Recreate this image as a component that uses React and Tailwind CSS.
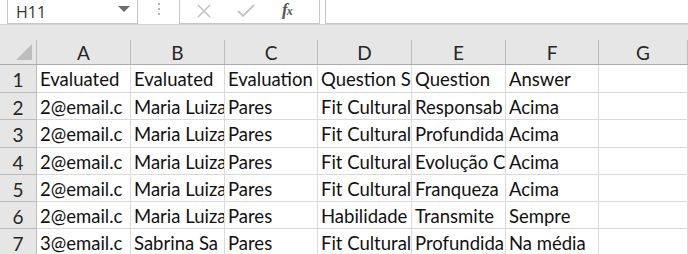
const cols = ['A', 'B', 'C', 'D', 'E', 'F', 'G'];

const rows = [
  ['Evaluated', 'Evaluated', 'Evaluation', 'Question S', 'Question', 'Answer', ''],
  ['2@email.c', 'Maria Luiza', 'Pares', 'Fit Cultural', 'Responsab', 'Acima', ''],
  ['2@email.c', 'Maria Luiza', 'Pares', 'Fit Cultural', 'Profundida', 'Acima', ''],
  ['2@email.c', 'Maria Luiza', 'Pares', 'Fit Cultural', 'Evolução C', 'Acima', ''],
  ['2@email.c', 'Maria Luiza', 'Pares', 'Fit Cultural', 'Franqueza', 'Acima', ''],
  ['2@email.c', 'Maria Luiza', 'Pares', 'Habilidade', 'Transmite', 'Sempre', ''],
  ['3@email.c', 'Sabrina Sa', 'Pares', 'Fit Cultural', 'Profundida', 'Na média', ''],
];

const rowHeights = ['h-[28px]', 'h-[27px]', 'h-[28px]', 'h-[27px]', 'h-[27px]', 'h-[27px]', 'h-[28px]'];

const grid = 'grid grid-cols-[37px_94px_94px_93px_94px_94px_93px_1fr]';

export default function App() {
  return (
    <div className="w-[688px] h-[254px] overflow-hidden bg-white font-['Lato',sans-serif]">
      {/* Formula bar */}
      <div className="flex h-[25px] border-b border-[#d4d4d4] bg-white">
        <div className="ml-[7px] w-[131px] h-[24px] border border-t-0 border-[#c6c6c6] flex items-center justify-between pl-[8px] pr-[7px]">
          <span className="font-['Open_Sans',sans-serif] text-[16px] text-[#333] leading-none">H11</span>
          <span className="w-0 h-0 border-l-[6px] border-r-[6px] border-t-[6px] border-l-transparent border-r-transparent border-t-[#6f6f6f] mb-[5px]"></span>
        </div>
        <div className="w-[41px] flex flex-col items-center justify-start pt-[3px] gap-[3px]">
          <span className="w-[2px] h-[2px] bg-[#b5b5b5]"></span>
          <span className="w-[2px] h-[2px] bg-[#b5b5b5]"></span>
          <span className="w-[2px] h-[2px] bg-[#b5b5b5]"></span>
        </div>
        <div className="w-[141px] h-[24px] border border-t-0 border-[#c6c6c6] flex items-center pl-[17px]">
          <svg width="14" height="14" viewBox="0 0 14 14" className="mb-[2px]">
            <path d="M1 1 L13 13 M13 1 L1 13" stroke="#c3c3c3" strokeWidth="1.6" fill="none" />
          </svg>
          <svg width="18" height="14" viewBox="0 0 18 14" className="ml-[26px] mb-[1px]">
            <path d="M1 7 L6 12 L17 1" stroke="#c3c3c3" strokeWidth="1.8" fill="none" />
          </svg>
          <span className="ml-[27px] mb-[4px] font-['Liberation_Serif',serif] italic font-bold text-[17px] text-[#555] leading-none tracking-[-1px]">
            f<span className="text-[12px]">x</span>
          </span>
        </div>
        <div className="ml-[5px] flex-1 h-[24px] border-l border-b border-[#c6c6c6]"></div>
      </div>

      {/* Gap strip */}
      <div className="h-[15px] bg-[#e6e6e6]"></div>

      {/* Column headers */}
      <div className={`${grid} h-[25px] bg-[#e6e6e6] border-b border-[#ababab]`}>
        <div className="relative border-r border-[#bcbcbc]">
          <span className="absolute right-[4px] bottom-[4px] w-0 h-0 [border-bottom:16px_solid_#bdbdbd] [border-left:16px_solid_transparent]"></span>
        </div>
        {cols.map((c) => (
          <div key={c} className="border-r border-[#bcbcbc] flex items-center justify-center pt-[1px] text-[19px] text-[#262626] leading-none">
            {c}
          </div>
        ))}
      </div>

      {/* Rows */}
      {rows.map((r, i) => (
        <div key={i} className={`${grid} ${rowHeights[i]}`}>
          <div className="bg-[#e6e6e6] border-r border-b border-[#bcbcbc] flex items-center justify-center pt-[2px] text-[19px] text-[#262626] leading-none">
            {i + 1}
          </div>
          {r.map((v, j) => (
            <div key={j} className="border-r border-b border-[#dadada] overflow-hidden whitespace-nowrap flex items-center pl-[3px] pt-[2px] text-[18.5px] text-[#111] leading-none">
              {v}
            </div>
          ))}
        </div>
      ))}
    </div>
  );
}
